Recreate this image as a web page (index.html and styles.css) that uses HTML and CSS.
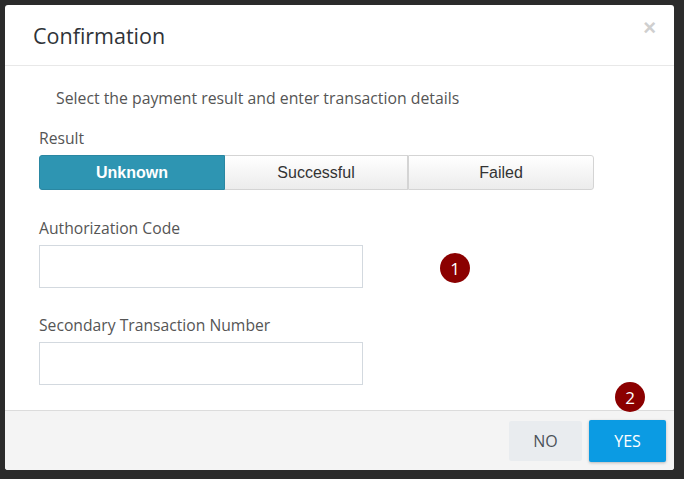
FILE: index.html
```html
<!DOCTYPE html>
<html>
<head>
<meta charset="utf-8">
<link rel="stylesheet" href="styles.css">
</head>
<body>
<div class="modal">
  <div class="modal-header">
    <h4 class="modal-title">Confirmation</h4>
    <span class="close">&times;</span>
  </div>
  <div class="modal-body">
    <p class="intro">Select the payment result and enter transaction details</p>
    <label class="field-label">Result</label>
    <div class="btn-group">
      <span class="seg active">Unknown</span>
      <span class="seg">Successful</span>
      <span class="seg">Failed</span>
    </div>
    <label class="field-label gap">Authorization Code</label>
    <div class="input"></div>
    <label class="field-label gap-sm">Secondary Transaction Number</label>
    <div class="input"></div>
  </div>
  <div class="modal-footer">
    <span class="btn btn-no">NO</span>
    <span class="btn btn-yes">YES</span>
  </div>
  <span class="badge badge-1">1</span>
  <span class="badge badge-2">2</span>
</div>
</body>
</html>
```
FILE: styles.css
```css
html, body {
  margin: 0;
  padding: 0;
}
body {
  background: #2b2b2b;
  padding: 5px;
  font-family: "Open Sans", "Liberation Sans", sans-serif;
  color: #333;
  width: 684px;
  height: 479px;
  box-sizing: border-box;
  overflow: hidden;
}
.modal {
  position: relative;
  width: 669px;
  height: 465px;
  background: #fff;
  border-radius: 3px;
  display: flex;
  flex-direction: column;
  overflow: hidden;
}
.modal-header {
  height: 61px;
  box-sizing: border-box;
  border-bottom: 1px solid #e8e8e8;
  display: flex;
  align-items: center;
  justify-content: space-between;
  padding: 0 18px 0 28px;
}
.modal-title {
  margin: 0;
  font-size: 21.5px;
  line-height: 28px;
  font-weight: 400;
  color: #2f3338;
  padding-top: 2px;
}
.close {
  font-family: "Liberation Sans", sans-serif;
  font-size: 22px;
  font-weight: 700;
  color: #cfcfcf;
  align-self: flex-start;
  margin-top: 10px;
}
.modal-body {
  flex: 1;
  padding: 22px 34px 0 34px;
  display: flex;
  flex-direction: column;
  align-items: flex-start;
}
.intro {
  margin: 0 0 20px 17px;
  font-size: 15.8px;
  line-height: 20px;
  color: #555;
}
.field-label {
  display: block;
  font-size: 15.7px;
  line-height: 20px;
  color: #555;
  margin-bottom: 7px;
}
.field-label.gap {
  margin-top: 28px;
}
.field-label.gap-sm {
  margin-top: 27px;
}
.btn-group {
  display: flex;
  width: 555px;
  height: 35px;
  font-family: "Liberation Sans", Arial, sans-serif;
  font-size: 16px;
}
.seg {
  flex: 0 0 auto;
  display: flex;
  align-items: center;
  justify-content: center;
  box-sizing: border-box;
  border: 1px solid #d4d4d4;
  background: linear-gradient(#ffffff, #ececec);
  color: #333;
}
.seg:nth-child(1) { width: 186px; border-radius: 3px 0 0 3px; }
.seg:nth-child(2) { width: 183px; border-left: none; }
.seg:nth-child(3) { width: 186px; border-left: 1px solid #d4d4d4; border-radius: 0 3px 3px 0; }
.seg.active {
  background: #2e95b2;
  border-color: #2a87a2;
  color: #fff;
  font-weight: 700;
}
.input {
  width: 324px;
  height: 43px;
  box-sizing: border-box;
  border: 1px solid #d3d9df;
  background: #fff;
}
.modal-footer {
  height: 60px;
  box-sizing: border-box;
  border-top: 1px solid #dcdcdc;
  background: #f4f4f4;
  display: flex;
  justify-content: flex-end;
  align-items: center;
  gap: 7px;
  padding-right: 8px;
}
.btn {
  display: flex;
  align-items: center;
  justify-content: center;
  font-size: 16px;
  border-radius: 2px;
}
.btn-no {
  width: 73px;
  height: 40px;
  background: #e9ecef;
  color: #4c5258;
}
.btn-yes {
  width: 77px;
  height: 42px;
  background: #0b9be3;
  color: #fff;
  box-shadow: 0 1px 3px rgba(0,0,0,0.25);
}
.badge {
  position: absolute;
  width: 30px;
  height: 30px;
  border-radius: 50%;
  background: #8b0000;
  color: #fff;
  font-size: 17px;
  display: flex;
  align-items: center;
  justify-content: center;
}
.badge-1 { left: 435px; top: 248px; }
.badge-2 { left: 610px; top: 377px; }
```
